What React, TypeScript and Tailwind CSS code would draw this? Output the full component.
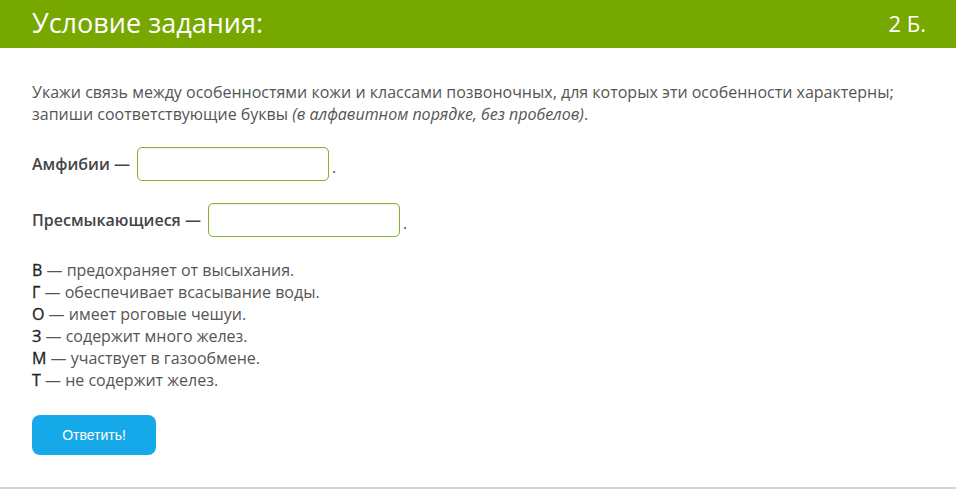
import React from "react";

const items: [string, string][] = [
  ["В", "предохраняет от высыхания."],
  ["Г", "обеспечивает всасывание воды."],
  ["О", "имеет роговые чешуи."],
  ["З", "содержит много желез."],
  ["М", "участвует в газообмене."],
  ["Т", "не содержит желез."],
];

export default function App() {
  return (
    <div className="w-[956px] h-[489px] bg-white flex flex-col font-['Open_Sans',sans-serif] text-[#555]">
      <div className="h-12 bg-[#77a800] flex items-center justify-between px-8 text-white">
        <div className="text-[27px] leading-none pb-[3px]">Условие задания:</div>
        <div className="text-[22px] leading-none pb-[3px] -mr-[2px]">2 Б.</div>
      </div>
      <div className="flex-1 px-8 pt-[33px] border-b-2 border-[#d4d4d4]">
        <p className="text-[16px] leading-[22px]">
          Укажи связь между особенностями кожи и классами позвоночных, для которых эти особенности характерны;
          <br />
          запиши соответствующие буквы <i>(в алфавитном порядке, без пробелов)</i>.
        </p>
        <div className="mt-[22px] flex items-center text-[16px]">
          <span className="font-semibold text-[#444]">Амфибии —</span>
          <input className="ml-[7px] w-[192px] h-[34px] rounded-[5px] border border-[#86b030] outline-none shadow-[inset_0_1px_2px_rgba(0,0,0,0.06)]" />
          <span className="ml-[3px] mt-[6px]">.</span>
        </div>
        <div className="mt-[22px] flex items-center text-[16px]">
          <span className="font-semibold text-[#444]">Пресмыкающиеся —</span>
          <input className="ml-[7px] w-[192px] h-[34px] rounded-[5px] border border-[#86b030] outline-none shadow-[inset_0_1px_2px_rgba(0,0,0,0.06)]" />
          <span className="ml-[3px] mt-[6px]">.</span>
        </div>
        <div className="mt-[22px] text-[16px] leading-[22px]">
          {items.map(([l, t]) => (
            <div key={l}>
              <span className="text-[#222] [-webkit-text-stroke:0.3px_#222]">{l}</span> — {t}
            </div>
          ))}
        </div>
        <button className="mt-[24px] w-[124px] h-[40px] rounded-[8px] bg-[#16a9e9] text-white text-[14px] font-['Liberation_Sans',sans-serif]">
          Ответить!
        </button>
      </div>
    </div>
  );
}
